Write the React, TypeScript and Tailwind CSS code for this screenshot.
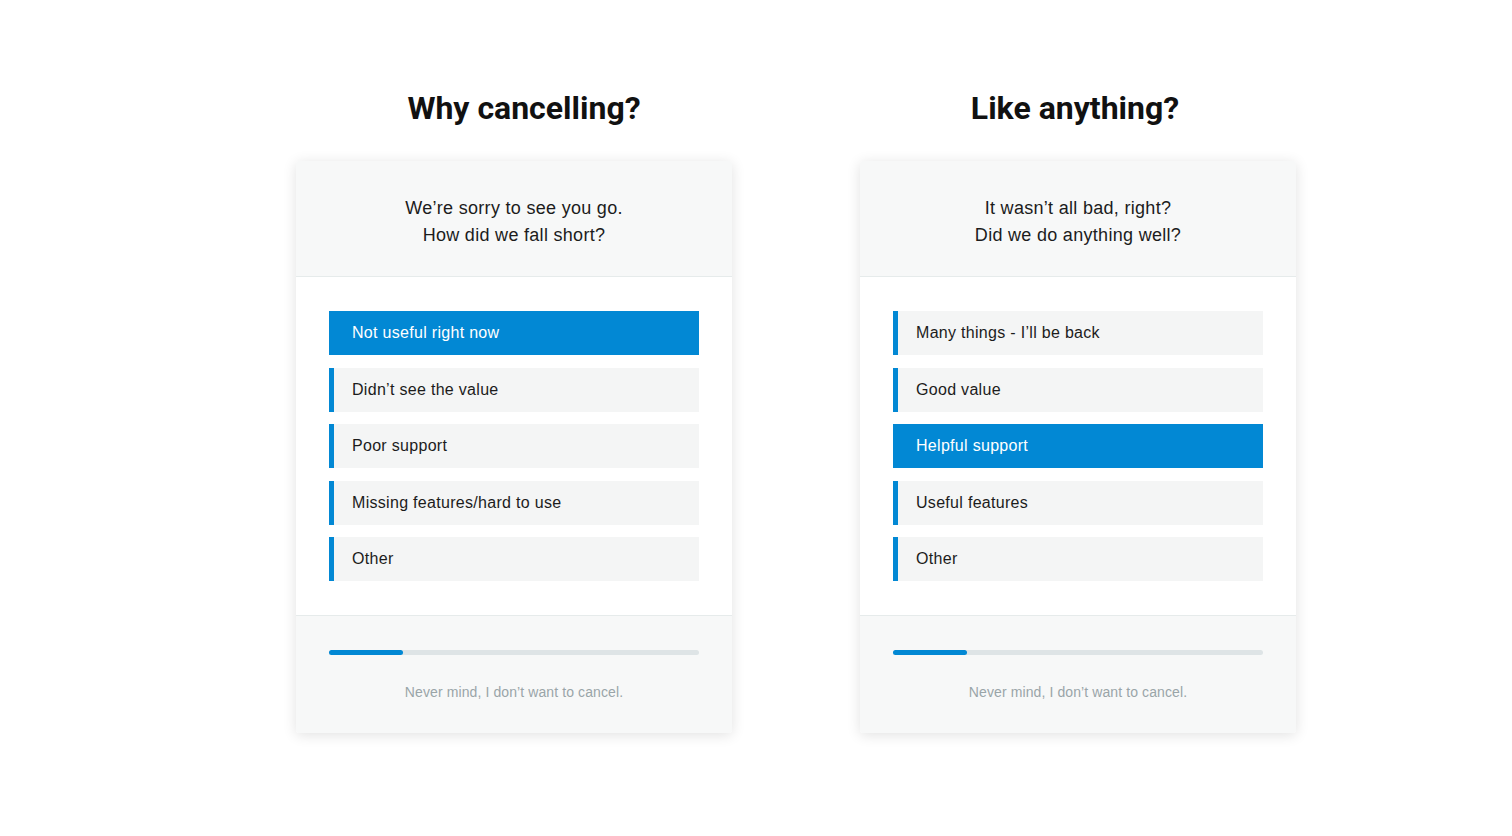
type Option = { label: string; selected?: boolean };

interface SurveyCardProps {
  title: string;
  titleOffset: string;
  lines: string[];
  options: Option[];
  progress: number;
}

function SurveyCard({ title, titleOffset, lines, options, progress }: SurveyCardProps) {
  return (
    <div className="flex w-[436px] flex-col">
      <h1
        className={`h-[40px] text-center font-['Roboto'] text-[32px] leading-[40px] font-bold text-[#111] ${titleOffset}`}
      >
        {title}
      </h1>
      <div className="mt-[33px] overflow-hidden rounded-[3px] bg-white shadow-[0_2px_14px_rgba(0,0,0,0.12)]">
        <div className="border-b border-[#e6ebeb] bg-[#f7f8f8] pt-[34px] pb-[27px] text-center font-['Liberation_Sans'] text-[18px] leading-[27px] tracking-[0.3px] text-[#1c1c1c]">
          {lines.map((l) => (
            <p key={l}>{l}</p>
          ))}
        </div>
        <div className="flex flex-col gap-[12.5px] bg-white px-[33px] py-[34px]">
          {options.map((o) =>
            o.selected ? (
              <div
                key={o.label}
                className="flex h-[44px] items-center bg-[#0288d4] pl-[23px] font-['Liberation_Sans'] text-[16px] tracking-[0.3px] text-white"
              >
                {o.label}
              </div>
            ) : (
              <div
                key={o.label}
                className="flex h-[44px] items-center border-l-[5px] border-[#0288d4] bg-[#f4f5f5] pl-[18px] font-['Liberation_Sans'] text-[16px] tracking-[0.3px] text-[#1c1c1c]"
              >
                {o.label}
              </div>
            )
          )}
        </div>
        <div className="flex flex-col border-t border-[#e6ebeb] bg-[#f7f8f8] px-[33px] pt-[34px] pb-[32px]">
          <div className="h-[5px] w-full rounded-full bg-[#dee4e6]">
            <div
              className="h-full rounded-full bg-[#0288d4]"
              style={{ width: `${progress}%` }}
            />
          </div>
          <p className="mt-[28px] text-center font-['Liberation_Sans'] text-[14px] leading-[18px] tracking-[0.1px] text-[#9aa5a8]">
            Never mind, I don’t want to cancel.
          </p>
        </div>
      </div>
    </div>
  );
}

export default function App() {
  return (
    <div className="min-h-[836px] w-full bg-white">
      <div className="flex gap-[128px] pt-[88px] pl-[296px]">
        <SurveyCard
          title="Why cancelling?"
          titleOffset="pl-[20px]"
          lines={["We’re sorry to see you go.", "How did we fall short?"]}
          options={[
            { label: "Not useful right now", selected: true },
            { label: "Didn’t see the value" },
            { label: "Poor support" },
            { label: "Missing features/hard to use" },
            { label: "Other" },
          ]}
          progress={20}
        />
        <SurveyCard
          title="Like anything?"
          titleOffset="pr-[6px]"
          lines={["It wasn’t all bad, right?", "Did we do anything well?"]}
          options={[
            { label: "Many things - I’ll be back" },
            { label: "Good value" },
            { label: "Helpful support", selected: true },
            { label: "Useful features" },
            { label: "Other" },
          ]}
          progress={20}
        />
      </div>
    </div>
  );
}
